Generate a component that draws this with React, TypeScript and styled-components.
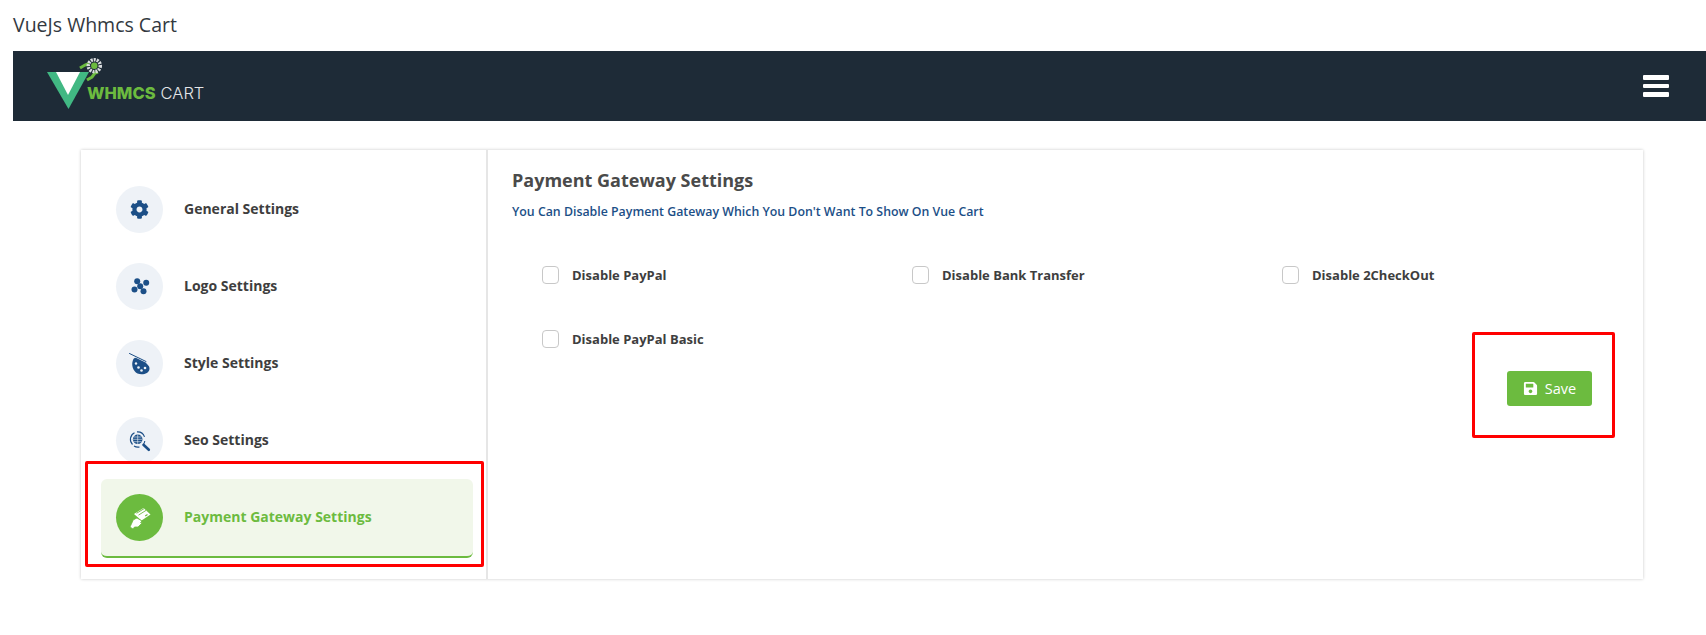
import styled, { createGlobalStyle } from 'styled-components';
import { FaCog, FaSave } from 'react-icons/fa';

const GlobalStyle = createGlobalStyle`
  body {
    margin: 0;
    background: #fff;
    font-family: 'Open Sans', sans-serif;
  }
`;

const Page = styled.div`
  position: relative;
  height: 635px;
  overflow: hidden;
`;

const PageTitle = styled.h1`
  margin: 0;
  height: 51px;
  padding: 11px 0 0 13px;
  box-sizing: border-box;
  font-size: 19.5px;
  line-height: 27px;
  font-weight: 400;
  color: #33393f;
`;

const Navbar = styled.header`
  margin-left: 13px;
  height: 70px;
  padding: 0 37px 0 34px;
  background: #1e2b37;
  display: flex;
  align-items: center;
  justify-content: space-between;
`;

const Brand = styled.div`
  position: relative;
  width: 170px;
  height: 70px;
`;

const BrandMark = styled.svg`
  position: absolute;
  left: 0;
  top: 0;
`;

const BrandText = styled.div`
  position: absolute;
  left: 40px;
  top: 31px;
  font-family: Inter, 'Open Sans', sans-serif;
  font-size: 16.5px;
  line-height: 22px;
  font-weight: 300;
  color: #e4e6e8;
  white-space: nowrap;
  b {
    color: #6cbb3f;
    font-weight: 800;
    margin-right: 5px;
  }
`;

const Burger = styled.div`
  width: 26px;
  display: flex;
  flex-direction: column;
  gap: 4px;
  span {
    height: 4.5px;
    border-radius: 1px;
    background: #fff;
  }
`;

const Card = styled.section`
  margin: 29px 63px 0 81px;
  height: 429px;
  box-sizing: border-box;
  background: #fff;
  display: flex;
  box-shadow: 0 0 3px rgba(0, 0, 0, 0.22);
`;

const Sidebar = styled.nav`
  width: 407px;
  flex-shrink: 0;
  box-sizing: border-box;
  padding: 21px 13px 0 20px;
  border-right: 2px solid #e6e6e6;
`;

const NavItem = styled.div<{ $active?: boolean }>`
  display: flex;
  align-items: center;
  gap: 21px;
  padding: 15px;
  border-radius: 6px;
  background: ${(p) => (p.$active ? '#f1f7ea' : 'transparent')};
  border-bottom: ${(p) => (p.$active ? '2px solid #6cbb3f' : 'none')};
  color: ${(p) => (p.$active ? '#6cbb3f' : '#3e3e3e')};
  font-size: 14px;
  font-weight: 700;
`;

const NavLabel = styled.span`
  margin-bottom: 2px;
`;

const IconCircle = styled.span<{ $active?: boolean }>`
  width: 47px;
  height: 47px;
  border-radius: 50%;
  display: flex;
  align-items: center;
  justify-content: center;
  flex-shrink: 0;
  background: ${(p) => (p.$active ? '#6cbb3f' : '#eef2f7')};
  color: ${(p) => (p.$active ? '#fff' : '#1c4f87')};
`;

const Content = styled.div`
  flex: 1;
  min-width: 0;
  padding: 17px 24px 0 24px;
`;

const Heading = styled.h2`
  margin: 0;
  font-size: 18px;
  line-height: 26px;
  font-weight: 700;
  color: #4a4a4a;
`;

const Subheading = styled.p`
  margin: 11px 0 0;
  font-size: 12.35px;
  line-height: 16px;
  font-weight: 600;
  color: #1c4f87;
`;

const OptionGrid = styled.div`
  margin: 46px 0 0 30px;
  display: grid;
  grid-template-columns: repeat(3, 370px);
  row-gap: 46px;
`;

const Option = styled.label`
  display: flex;
  align-items: center;
  gap: 13px;
  height: 18px;
  font-size: 13px;
  font-weight: 700;
  color: #3e3e3e;
`;

const Check = styled.span`
  width: 17px;
  height: 18px;
  box-sizing: border-box;
  border: 1px solid #c8c8c8;
  border-radius: 4px;
  background: #fff;
`;

const Actions = styled.div`
  margin-top: 23px;
  display: flex;
  justify-content: flex-end;
  padding-right: 27px;
`;

const SaveButton = styled.button`
  width: 85px;
  height: 35px;
  border: none;
  border-radius: 3px;
  background: #6cbb3f;
  color: #fff;
  font-family: inherit;
  font-size: 14.5px;
  font-weight: 500;
  display: flex;
  align-items: center;
  justify-content: center;
  gap: 7px;
  padding: 0;
`;

const Annotation = styled.div<{ $x: number; $y: number; $w: number; $h: number }>`
  position: absolute;
  left: ${(p) => p.$x}px;
  top: ${(p) => p.$y}px;
  width: ${(p) => p.$w}px;
  height: ${(p) => p.$h}px;
  box-sizing: border-box;
  border: 3px solid #ff0000;
  border-radius: 2px;
  pointer-events: none;
`;

function LogoIcon() {
  return (
    <svg width="22" height="22" viewBox="0 0 22 22" fill="currentColor">
      <circle cx="8.2" cy="5.2" r="3" />
      <circle cx="17.2" cy="6.8" r="3" />
      <circle cx="5.5" cy="13.5" r="3" />
      <circle cx="14.5" cy="15.2" r="3" />
      <circle cx="11.2" cy="10.2" r="3" />
    </svg>
  );
}

function PaletteIcon() {
  return (
    <svg width="30" height="30" viewBox="0 0 30 30" fill="currentColor">
      <path d="M8 11C6 16 8 22 12.500 24.500c5 2 11.500 0 12-4.500.3-3-2-4-3-5.500C20 12 17 9.500 14 8.500c-2-.7-5-.5-6 2.500z" />
      <path d="M4.500 4.500 21 12.500" stroke="#eef2f7" strokeWidth="2.2" />
      <path d="M4.500 4.500 21 12.500" stroke="currentColor" strokeWidth="1" strokeLinecap="round" />
      <circle cx="11" cy="14.5" r="1.2" fill="#eef2f7" />
      <circle cx="13.5" cy="18.5" r="1.3" fill="#eef2f7" />
      <circle cx="16.5" cy="21.5" r="1.3" fill="#eef2f7" />
      <circle cx="20" cy="19" r="1.3" fill="#eef2f7" />
    </svg>
  );
}

function SeoIcon() {
  return (
    <svg width="30" height="30" viewBox="0 0 30 30" fill="none" stroke="currentColor">
      <circle cx="12.7" cy="13.3" r="4.8" fill="currentColor" stroke="none" />
      <path d="M8 13.3h9.500M12.700 8.500v9.600M8.800 11h7.800M8.800 15.700h7.800" stroke="#eef2f7" strokeWidth="0.6" />
      <path d="M7.500 18.500A7.400 7.400 0 0 1 9.500 6.700M12 5.900a7.400 7.400 0 0 1 7.500 5M19.800 15a7.400 7.400 0 0 1-1.500 3.500M9 20a7.400 7.400 0 0 0 5.500 1" strokeWidth="1.1" />
      <path d="M18.500 18.800l5.300 5" strokeWidth="2.6" strokeLinecap="round" />
    </svg>
  );
}

function PaymentIcon() {
  return (
    <svg width="30" height="30" viewBox="0 0 30 30" fill="currentColor">
      <path d="M9 11l9.500-6 7 6.500-9 6z" />
      <path d="M11.500 10.300 19 5.700M13.500 12.100l7.500-4.700" stroke="#6cbb3f" strokeWidth="0.9" />
      <path d="M22.500 11.500l-2.300 1.500" stroke="#6cbb3f" strokeWidth="1.2" />
      <path d="M5 24l3-6.500c1-1.500 3-2 4-2.500l5 3-1.500 1.500h2L13 24H9.500L8 26z" stroke="#6cbb3f" strokeWidth="0.8" />
    </svg>
  );
}

export default function App() {
  const items = [
    { label: 'General Settings', icon: <FaCog size={19} /> },
    { label: 'Logo Settings', icon: <LogoIcon /> },
    { label: 'Style Settings', icon: <PaletteIcon /> },
    { label: 'Seo Settings', icon: <SeoIcon /> },
    { label: 'Payment Gateway Settings', icon: <PaymentIcon />, active: true },
  ];
  const options = ['Disable PayPal', 'Disable Bank Transfer', 'Disable 2CheckOut', 'Disable PayPal Basic'];

  return (
    <Page>
      <GlobalStyle />
      <PageTitle>VueJs Whmcs Cart</PageTitle>
      <Navbar>
        <Brand>
          <BrandMark width="80" height="70" viewBox="0 0 80 70">
            <path d="M0 21h42L21.500 58z" fill="#41b883" />
            <path d="M9 21h24L21 44z" fill="#fff" />
            <path d="M33 17l5-3 4-1.500" fill="none" stroke="#6cbb3f" strokeWidth="3" />
            <path d="M40 29l5-3 3-4 3-1" fill="none" stroke="#6cbb3f" strokeWidth="3" />
            <circle cx="47.3" cy="14.7" r="6" fill="none" stroke="#d8dbdd" strokeWidth="3.5" strokeDasharray="2 1" />
            <circle cx="47.3" cy="14.7" r="3.2" fill="#6cbb3f" />
          </BrandMark>
          <BrandText>
            <b>WHMCS</b>CART
          </BrandText>
        </Brand>
        <Burger>
          <span />
          <span />
          <span />
        </Burger>
      </Navbar>
      <Card>
        <Sidebar>
          {items.map((item) => (
            <NavItem key={item.label} $active={item.active}>
              <IconCircle $active={item.active}>{item.icon}</IconCircle>
              <NavLabel>{item.label}</NavLabel>
            </NavItem>
          ))}
        </Sidebar>
        <Content>
          <Heading>Payment Gateway Settings</Heading>
          <Subheading>You Can Disable Payment Gateway Which You Don't Want To Show On Vue Cart</Subheading>
          <OptionGrid>
            {options.map((option) => (
              <Option key={option}>
                <Check />
                {option}
              </Option>
            ))}
          </OptionGrid>
          <Actions>
            <SaveButton>
              <FaSave size={15} />
              Save
            </SaveButton>
          </Actions>
        </Content>
      </Card>
      <Annotation $x={85} $y={461} $w={399} $h={106} />
      <Annotation $x={1472} $y={332} $w={143} $h={106} />
    </Page>
  );
}
